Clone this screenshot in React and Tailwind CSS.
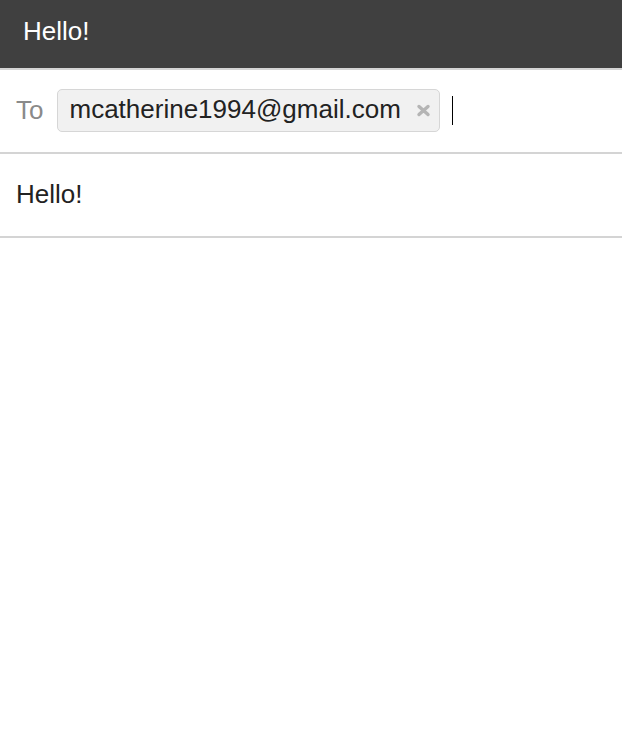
export default function App() {
  return (
    <div className="w-[622px] h-[738px] bg-white" style={{ fontFamily: '"Liberation Sans", Arial, sans-serif' }}>
      <div className="h-[70px] bg-[#404040] border-b-2 border-[#d4d4d4] flex items-center pl-[23px] pb-[7px]">
        <span className="text-white text-[26px] leading-none">Hello!</span>
      </div>
      <div className="h-[84px] border-b-2 border-[#d4d4d4] flex items-center pl-[16px] pb-[2px]">
        <span className="text-[#8a8a8a] text-[26px] leading-none">To</span>
        <div className="ml-[14px] h-[43px] w-[383px] rounded-[5px] border border-[#d6d6d6] bg-[#f1f1f1] flex items-center pl-[11px] pr-[8px] pb-[2px]">
          <span className="text-[#222] text-[26px] leading-none flex-1">mcatherine1994@gmail.com</span>
          <svg width="15" height="13" viewBox="0 0 15 13" className="mt-[2px]">
            <path d="M3 2.5 L12 10.5 M12 2.5 L3 10.5" stroke="#b5b5b5" strokeWidth="3.4" strokeLinecap="round" />
          </svg>
        </div>
        <div className="ml-[12px] w-px h-[29px] bg-black"></div>
      </div>
      <div className="h-[84px] border-b-2 border-[#d4d4d4] flex items-center pl-[16px] pb-[2px]">
        <span className="text-[#222] text-[26px] leading-none">Hello!</span>
      </div>
    </div>
  );
}
